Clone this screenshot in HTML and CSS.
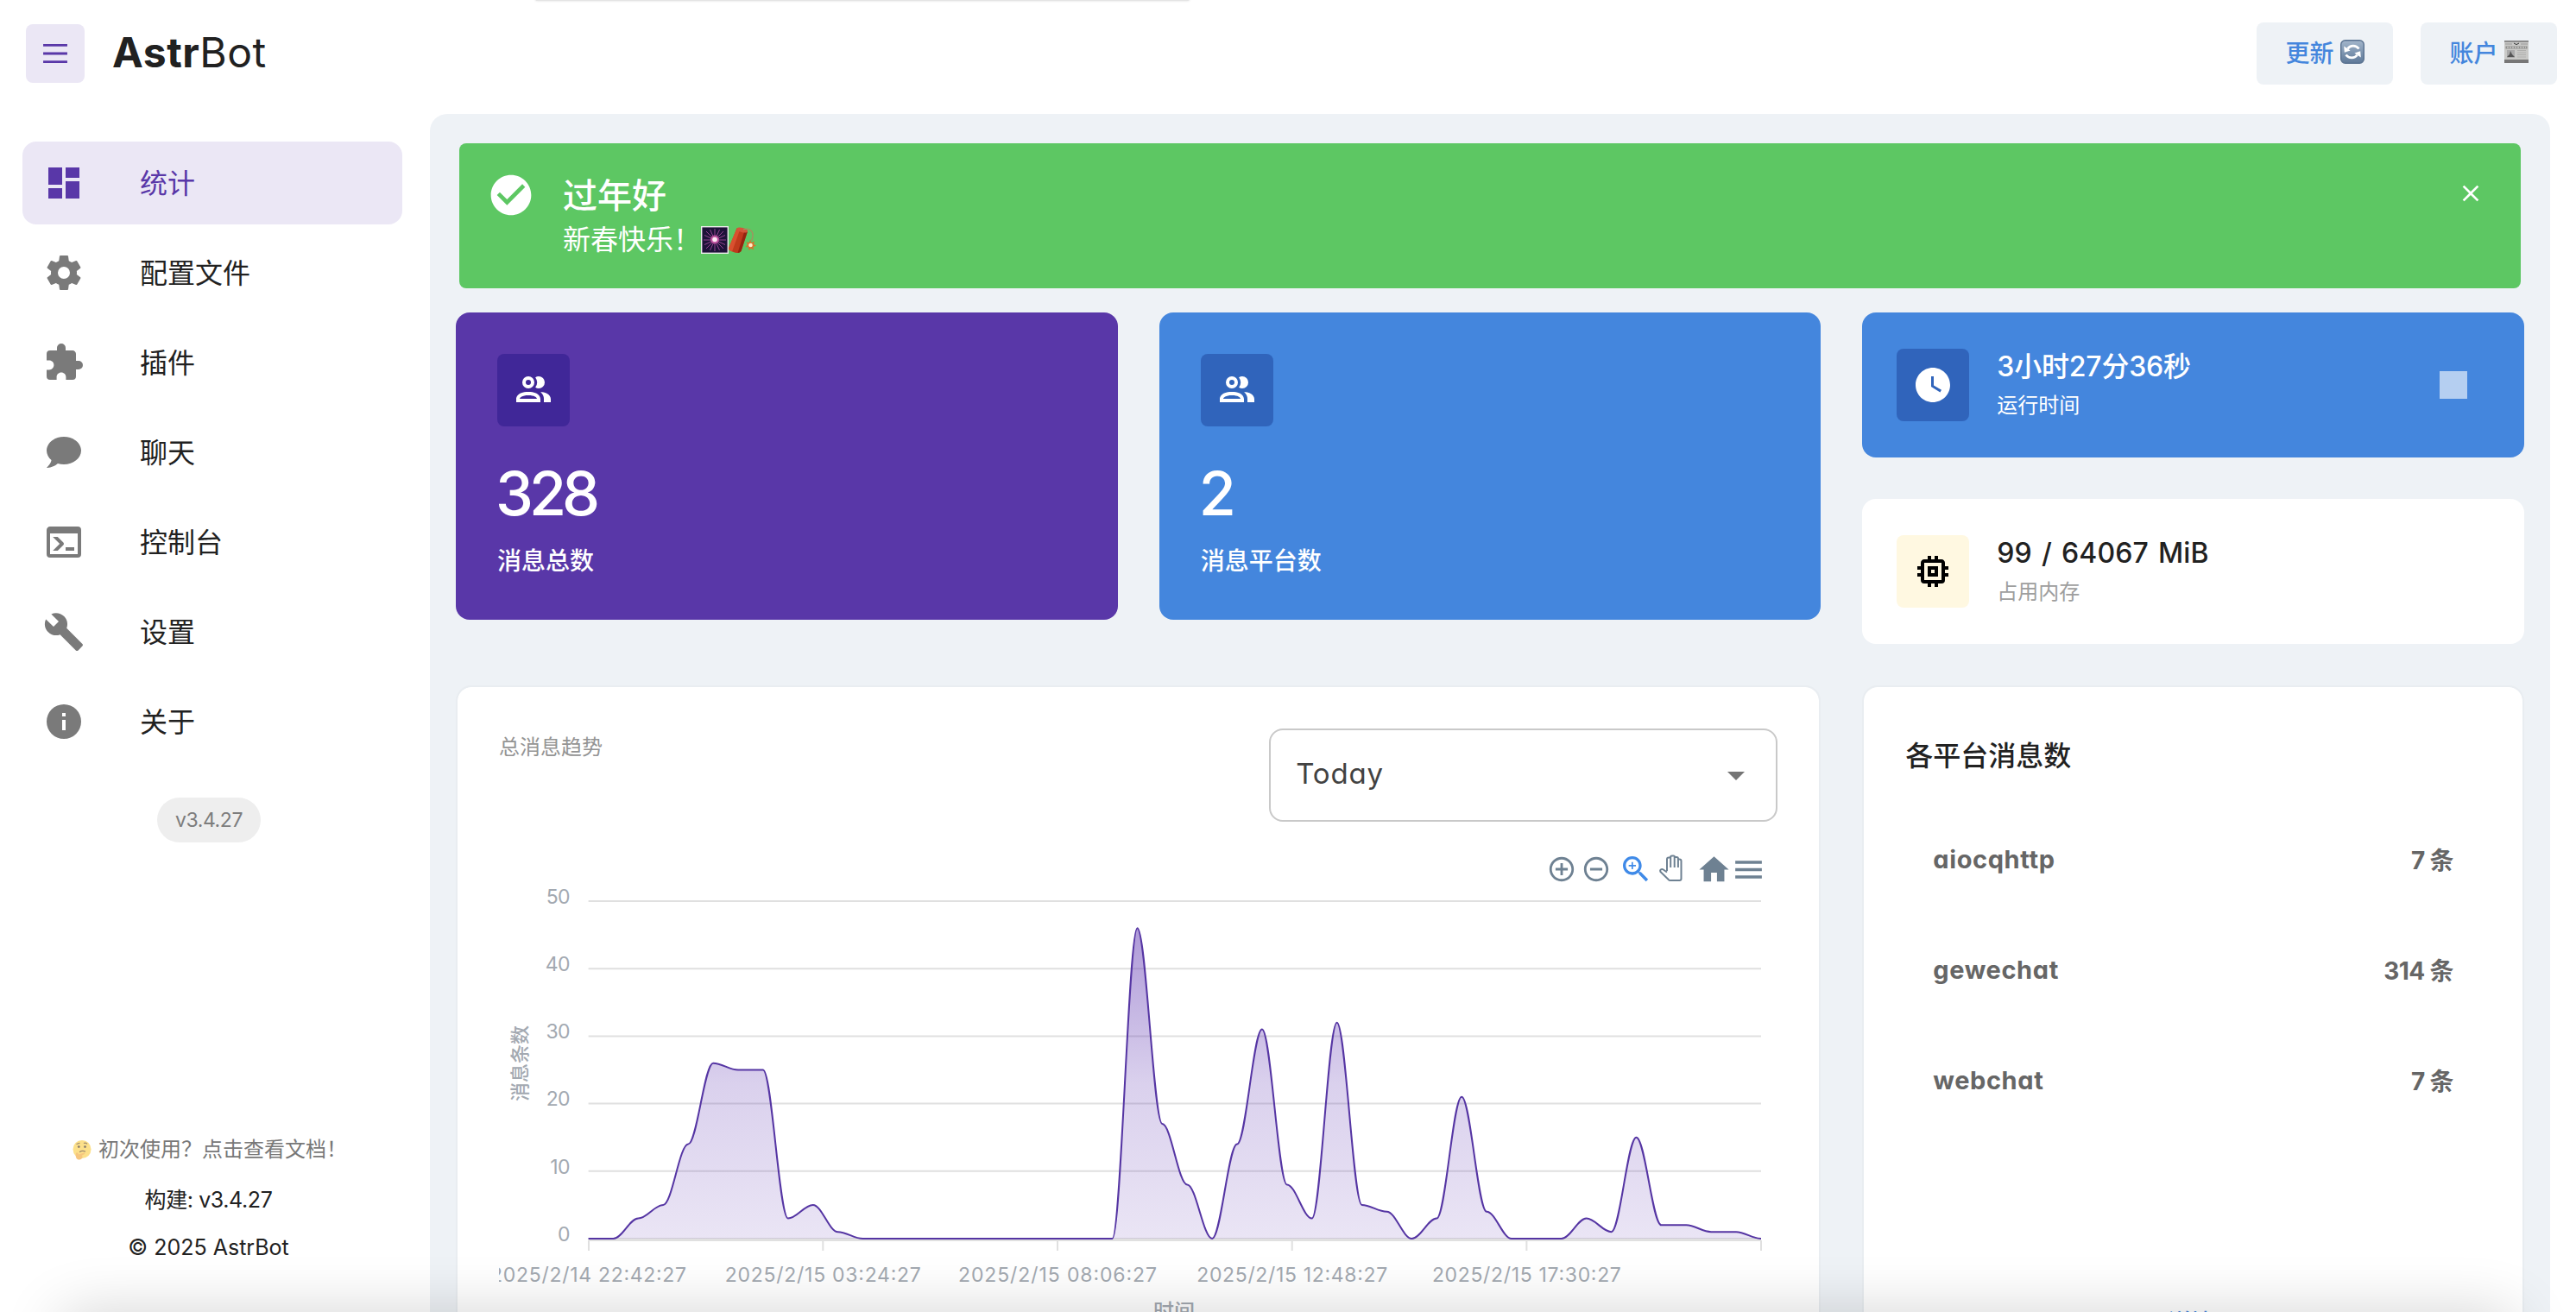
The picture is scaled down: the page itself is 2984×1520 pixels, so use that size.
FILE: index.html
```html
<!DOCTYPE html>
<html lang="zh-CN">
<head>
<meta charset="utf-8">
<title>AstrBot</title>
<link rel="stylesheet" href="styles.css">
</head>
<body>
<header class="topbar">
  <button class="menu-btn" aria-label="menu">
    <svg width="36" height="36" viewBox="0 0 24 24" fill="none" stroke="currentColor" stroke-width="1.9"><path d="M2.7 5.6h18.6M2.7 12h18.6M2.7 18.4h18.6"/></svg>
  </button>
  <div class="brand"><b>Astr</b><span>Bot</span></div>
  <div class="actions">
    <button class="action">更新
      <svg width="28" height="28" viewBox="0 0 28 28"><defs><linearGradient id="sync" x1="0" y1="0" x2="0" y2="1"><stop offset="0" stop-color="#a3b6cb"/><stop offset="1" stop-color="#5d7898"/></linearGradient></defs><rect x=".7" y=".7" width="26.6" height="26.6" rx="5" fill="url(#sync)" stroke="#5b7391" stroke-width="1.4"/><g fill="none" stroke="#fff" stroke-width="2.8"><path d="M8.500 10.500C11.500 6 18 6 21.500 10.500"/><path d="M19.500 17.800C16.500 22 10 22 6.500 17.500"/></g><path d="M4.200 7.500l.6 7.300 6.800-2.200zM23.800 20.500l-.6-7.300-6.800 2.200z" fill="#fff"/></svg>
    </button>
    <button class="action">账户
      <svg width="28" height="28" viewBox="0 0 28 28"><rect y="1" width="28" height="26" fill="#c9c9c7"/><path d="M0 1h28v2H0zM0 23h28v4H0z" fill="#777"/><path d="M0 2.500h28M1 5h8M19 5h8" stroke="#999" stroke-width="1.200"/><path d="M11 4l3 1.600 3-1.600" stroke="#333" fill="none"/><path d="M1.500 7.500h25v3h-25z" fill="#8f8f8d"/><path d="M3 9h22" stroke="#ddd" stroke-dasharray="2 1"/><path d="M3 12h9v9H3z" fill="#aaa"/><path d="M3 20l3-3 1-4 2 4 3 3z" fill="#555"/><path d="M15 12.500h10M15 15h10M15 17.500h10M15 20h10" stroke="#b0b0ae"/></svg>
    </button>
  </div>
</header>

<div class="shell">
  <nav class="sidebar">
    <ul class="nav">
      <li class="nav-item active"><svg class="icon" viewBox="0 0 24 24"><path d="M13,3V9H21V3M13,21H21V11H13M3,21H11V15H3M3,13H11V3H3V13Z"/></svg><span>统计</span></li>
      <li class="nav-item"><svg class="icon" viewBox="0 0 24 24"><path d="M12,15.500A3.500,3.500 0 0,1 8.500,12A3.500,3.500 0 0,1 12,8.500A3.500,3.500 0 0,1 15.500,12A3.500,3.500 0 0,1 12,15.500M19.430,12.970C19.470,12.650 19.500,12.330 19.500,12C19.500,11.670 19.470,11.340 19.430,11L21.540,9.370C21.730,9.220 21.780,8.950 21.660,8.730L19.660,5.270C19.540,5.050 19.270,4.960 19.050,5.050L16.560,6.050C16.040,5.660 15.500,5.320 14.870,5.070L14.500,2.420C14.460,2.180 14.250,2 14,2H10C9.750,2 9.540,2.180 9.500,2.420L9.130,5.070C8.500,5.320 7.960,5.660 7.440,6.050L4.950,5.050C4.730,4.960 4.460,5.050 4.340,5.270L2.340,8.730C2.210,8.950 2.270,9.220 2.460,9.370L4.570,11C4.530,11.340 4.500,11.670 4.500,12C4.500,12.330 4.530,12.650 4.570,12.970L2.460,14.630C2.270,14.780 2.210,15.050 2.340,15.270L4.340,18.730C4.460,18.950 4.730,19.030 4.950,18.950L7.440,17.940C7.960,18.340 8.500,18.680 9.130,18.930L9.500,21.580C9.540,21.820 9.750,22 10,22H14C14.250,22 14.460,21.820 14.500,21.580L14.870,18.930C15.500,18.670 16.040,18.340 16.560,17.940L19.050,18.950C19.270,19.030 19.540,18.950 19.660,18.730L21.660,15.270C21.780,15.050 21.730,14.780 21.540,14.630L19.430,12.970Z"/></svg><span>配置文件</span></li>
      <li class="nav-item"><svg class="icon" viewBox="0 0 24 24"><path d="M20.500,11H19V7C19,5.890 18.100,5 17,5H13V3.500A2.500,2.500 0 0,0 10.500,1A2.500,2.500 0 0,0 8,3.500V5H4A2,2 0 0,0 2,7V10.800H3.500C5,10.800 6.200,12 6.200,13.500C6.200,15 5,16.200 3.500,16.200H2V20A2,2 0 0,0 4,22H7.800V20.500C7.800,19 9,17.800 10.500,17.800C12,17.800 13.200,19 13.200,20.500V22H17A2,2 0 0,0 19,20V16H20.500A2.500,2.500 0 0,0 23,13.500A2.500,2.500 0 0,0 20.500,11Z"/></svg><span>插件</span></li>
      <li class="nav-item"><svg class="icon" viewBox="0 0 24 24"><path d="M12,3C17.500,3 22,6.580 22,11C22,15.420 17.500,19 12,19C10.760,19 9.570,18.820 8.470,18.500C5.550,21 2,21 2,21C4.330,18.670 4.700,17.100 4.750,16.500C3.050,15.070 2,13.130 2,11C2,6.580 6.500,3 12,3Z"/></svg><span>聊天</span></li>
      <li class="nav-item"><svg class="icon" viewBox="0 0 24 24"><path d="M20,19V7H4V19H20M20,3A2,2 0 0,1 22,5V19A2,2 0 0,1 20,21H4A2,2 0 0,1 2,19V5C2,3.890 2.900,3 4,3H20M13,17V15H18V17H13M9.580,13L5.570,9H8.400L11.700,12.300C12.090,12.690 12.090,13.330 11.700,13.720L8.420,17H5.590L9.580,13Z"/></svg><span>控制台</span></li>
      <li class="nav-item"><svg class="icon" viewBox="0 0 24 24"><path d="M22.700,19L13.600,9.900C14.500,7.600 14,4.900 12.100,3C10.100,1 7.100,0.600 4.700,1.700L9,6L6,9L1.600,4.700C0.400,7.100 0.900,10.100 2.900,12.100C4.800,14 7.500,14.500 9.800,13.600L18.900,22.700C19.300,23.100 19.900,23.100 20.300,22.700L22.600,20.400C23.100,20 23.100,19.300 22.700,19Z"/></svg><span>设置</span></li>
      <li class="nav-item"><svg class="icon" viewBox="0 0 24 24"><path d="M13,9H11V7H13M13,17H11V11H13M12,2A10,10 0 0,0 2,12A10,10 0 0,0 12,22A10,10 0 0,0 22,12A10,10 0 0,0 12,2Z"/></svg><span>关于</span></li>
    </ul>
    <span class="chip">v3.4.27</span>
    <footer class="side-foot">
      <a class="docs"><svg width="24" height="24" viewBox="0 0 24 24"><circle cx="12" cy="11.500" r="10.500" fill="#fbd04d"/><circle cx="8.300" cy="8.600" r="1.400" fill="#4d3820"/><circle cx="15.500" cy="8.600" r="1.400" fill="#4d3820"/><path d="M5.500 5.500l4-1.200M14 4.500c1.500-.8 3-.5 4 .8M9 14.800c2-1.400 5-1.600 7-.6" fill="none" stroke="#6b4a1f" stroke-width="1.200"/><path d="M5 16c1.500-2 3 .5 3 1.500l6-2c1.600-.3 1.800 1.200.6 1.700L12 18.500c1.500 3-1 5-3.500 5S4 21 5 16z" fill="#f2a93b"/></svg>初次使用？点击查看文档！</a>
      <span class="build">构建: <span class="ver">v3.4.27</span></span>
      <span class="copy">© 2025 AstrBot</span>
    </footer>
  </nav>

  <main class="content">
    <section class="alert">
      <svg class="alert-icon" viewBox="0 0 24 24"><path d="M12 2C6.500 2 2 6.500 2 12S6.500 22 12 22 22 17.500 22 12 17.500 2 12 2M10 17L5 12L6.410 10.590L10 14.170L17.590 6.580L19 8L10 17Z"/></svg>
      <div class="alert-text">
        <h2>过年好</h2>
        <p>新春快乐！<svg width="64" height="32" viewBox="0 0 64 32"><rect x=".7" y=".7" width="30.600" height="30.600" fill="#1d1238" stroke="#eee" stroke-width="1.400"/><g stroke="#a04a98" stroke-width=".9"><path d="M16 3v26M3 16h26M6 6l20 20M26 6L6 26M10.500 4l11 24M21.500 4l-11 24M4 10.500l24 11M4 21.500l24-11"/></g><circle cx="16" cy="15.500" r="5" fill="#d95cae" opacity=".75"/><circle cx="16" cy="15.500" r="2.800" fill="#ffe9f6"/><path d="M41.500 2.500q5-2 12.500 3.500L46.500 29q-3 3.500-9 1-6-2-5-5z" fill="#c03a1c"/><path d="M41.500 2.500l3.500 2L36 29.500q-5-2-4-4.500z" fill="#d9502f"/><path d="M50 7l4-1L46.500 29q-1.500 2-4 2z" fill="#942410"/><ellipse cx="47.800" cy="4.500" rx="6.500" ry="2.700" transform="rotate(15 47.800 4.500)" fill="#d3563a"/><path d="M49 4c8-3 14 3 9.500 13" fill="none" stroke="#a98d5f" stroke-width="1.300"/><path d="M57 15.500l1.400 3.500 3.600-1.500-1 3.500 3 1.500-3.500 1.500.5 3.500-3-1.800-2.500 2.300-.5-3.500-3.500-.5 2.500-2.500-1.500-3 3.500.5z" fill="#d8702c"/><circle cx="57.500" cy="22" r="2.300" fill="#fff0c8"/></svg></p>
      </div>
      <svg class="alert-close" viewBox="0 0 24 24"><path d="M19,6.410L17.590,5L12,10.590L6.410,5L5,6.410L10.590,12L5,17.590L6.410,19L12,13.410L17.590,19L19,17.590L13.410,12L19,6.410Z"/></svg>
    </section>

    <section class="grid">
      <article class="stat purple">
        <div class="badge"><svg class="icon" viewBox="0 0 24 24"><path d="M13.070 10.410A5 5 0 0 0 13.070 4.590A3.390 3.390 0 0 1 15 4A3.500 3.500 0 0 1 15 11A3.390 3.390 0 0 1 13.070 10.410M5.500 7.500A3.500 3.500 0 1 1 9 11A3.500 3.500 0 0 1 5.500 7.500M7.500 7.500A1.500 1.500 0 1 0 9 6A1.500 1.500 0 0 0 7.500 7.500M16 17V19H2V17S2 13 9 13 16 17 16 17M14 17C13.860 16.220 12.670 15 9 15S4.070 16.310 4 17M15.950 13A5.320 5.320 0 0 1 18 17V19H22V17S22 13.370 15.940 13Z"/></svg></div>
        <strong class="value">328</strong>
        <span class="label">消息总数</span>
      </article>
      <article class="stat blue">
        <div class="badge"><svg class="icon" viewBox="0 0 24 24"><path d="M13.070 10.410A5 5 0 0 0 13.070 4.590A3.390 3.390 0 0 1 15 4A3.500 3.500 0 0 1 15 11A3.390 3.390 0 0 1 13.070 10.410M5.500 7.500A3.500 3.500 0 1 1 9 11A3.500 3.500 0 0 1 5.500 7.500M7.500 7.500A1.500 1.500 0 1 0 9 6A1.500 1.500 0 0 0 7.500 7.500M16 17V19H2V17S2 13 9 13 16 17 16 17M14 17C13.860 16.220 12.670 15 9 15S4.070 16.310 4 17M15.950 13A5.320 5.320 0 0 1 18 17V19H22V17S22 13.370 15.940 13Z"/></svg></div>
        <strong class="value">2</strong>
        <span class="label">消息平台数</span>
      </article>
      <div class="stack">
        <article class="mini blue">
          <div class="badge"><svg class="icon" viewBox="0 0 24 24"><path d="M12 2C6.500 2 2 6.500 2 12C2 17.500 6.500 22 12 22C17.500 22 22 17.500 22 12S17.500 2 12 2M16.200 16.200L11 13V7H12.500V12.200L17 14.900L16.200 16.200Z"/></svg></div>
          <div class="mini-text"><strong class="uptime">3小时27分36秒</strong><span>运行时间</span></div>
          <i class="stop"></i>
        </article>
        <article class="mini plain">
          <div class="badge cream"><svg class="icon" viewBox="0 0 24 24"><path d="M17,17H7V7H17M21,11V9H19V7C19,5.890 18.100,5 17,5H15V3H13V5H11V3H9V5H7C5.890,5 5,5.890 5,7V9H3V11H5V13H3V15H5V17A2,2 0 0,0 7,19H9V21H11V19H13V21H15V19H17A2,2 0 0,0 19,17V15H21V13H19V11M13,13H11V11H13M15,9H9V15H15V9Z"/></svg></div>
          <div class="mini-text"><strong class="memory">99 / 64067 MiB</strong><span>占用内存</span></div>
        </article>
      </div>

      <article class="panel trend">
        <div class="trend-head">
          <span class="trend-title">总消息趋势</span>
          <div class="select"><span>Today</span><svg class="icon" viewBox="0 0 24 24"><path d="M7,10L12,15L17,10H7Z"/></svg></div>
        </div>
        <div class="toolbar">
          <svg width="34" height="34" viewBox="0 0 24 24"><path d="M13 7h-2v4H7v2h4v4h2v-4h4v-2h-4V7zm-1-5C6.480 2 2 6.480 2 12s4.480 10 10 10 10-4.480 10-10S17.520 2 12 2zm0 18c-4.410 0-8-3.590-8-8s3.590-8 8-8 8 3.590 8 8-3.590 8-8 8z"/></svg>
          <svg class="t-minus" width="34" height="34" viewBox="0 0 24 24"><path d="M7 11v2h10v-2H7zm5-9C6.480 2 2 6.480 2 12s4.480 10 10 10 10-4.480 10-10S17.520 2 12 2zm0 18c-4.410 0-8-3.590-8-8s3.590-8 8-8 8 3.590 8 8-3.590 8-8 8z"/></svg>
          <svg class="t-zoom" width="40" height="40" viewBox="0 0 24 24"><path d="M15.500 14h-.79l-.28-.27C15.410 12.590 16 11.110 16 9.500 16 5.910 13.090 3 9.500 3S3 5.910 3 9.500 5.910 16 9.500 16c1.610 0 3.090-.59 4.230-1.570l.27.28v.79l5 4.990L20.490 19l-4.990-5zm-6 0C7.010 14 5 11.990 5 9.500S7.010 5 9.500 5 14 7.010 14 9.500 11.990 14 9.500 14z"/><path d="M12 10h-2v2H9v-2H7V9h2V7h1v2h2v1z"/></svg>
          <svg class="t-pan" width="32" height="32" viewBox="0 0 32 32" fill="none" stroke="#6e8192" stroke-width="2" stroke-linejoin="round"><path d="M10 19V5.500q0-2 2-2h2V3q0-1.500 2-1.500h1.500Q19 1.500 19 3h2q2 0 2 2v.500h1.500q2 0 2 2V28q0 2-2 2H14q-1.500 0-2.500-1.200L2.500 20q-.8-1.500.3-2.500 1.400-1 3 0L10 20.500"/><path d="M14.200 3v12M18.700 3v12M22.900 5v10"/></svg>
          <svg class="t-home" width="41" height="41" viewBox="0 0 24 24"><path d="M10 20v-6h4v6h5v-8h3L12 3 2 12h3v8z"/></svg>
          <svg width="41" height="41" viewBox="0 0 24 24"><path d="M3 18h18v-2H3v2zm0-5h18v-2H3v2zm0-7v2h18V6H3z"/></svg>
        </div>
        <svg class="chart" width="1482" height="520" viewBox="578 1010 1482 520">
          <defs><linearGradient id="area" x1="0" y1="0" x2="0" y2="1"><stop offset="0" stop-color="#5e35b1" stop-opacity=".5"/><stop offset=".5" stop-color="#5e35b1" stop-opacity=".23"/><stop offset="1" stop-color="#5e35b1" stop-opacity=".13"/></linearGradient></defs>
          <g class="gridlines"><path d="M681.600 1044H2040M681.600 1122.200H2040M681.600 1200.400H2040M681.600 1278.600H2040M681.600 1356.800H2040M681.600 1435H2040M681.600 1437H2040"/><path d="M682 1437v12M953.300 1437v12M1225 1437v12M1496.700 1437v12M1768.400 1437v12M2040 1437v12"/></g>
          <path id="fill" fill="url(#area)"/>
          <path id="line" fill="none" stroke="#5535a3" stroke-width="2"/>
          <g class="ylabels">
            <text x="660" y="1047">50</text><text x="660" y="1125">40</text><text x="660" y="1203">30</text><text x="660" y="1281">20</text><text x="660" y="1359.500">10</text><text x="660" y="1438">0</text>
          </g>
          <g class="xlabels">
            <text x="681.600" y="1485" textLength="227">2025/2/14 22:42:27</text><text x="953.300" y="1485" textLength="227">2025/2/15 03:24:27</text><text x="1225" y="1485" textLength="230">2025/2/15 08:06:27</text><text x="1496.700" y="1485" textLength="221">2025/2/15 12:48:27</text><text x="1768.400" y="1485" textLength="219">2025/2/15 17:30:27</text>
          </g>
          <text class="axis-title" transform="translate(610 1232) rotate(-90)" font-size="22">消息条数</text>
          <text class="axis-title" x="1360" y="1528" font-size="24">时间</text>
        </svg>
      </article>

      <article class="panel platforms">
        <h3>各平台消息数</h3>
        <ul>
          <li><span>aiocqhttp</span><span class="count">7 条</span></li>
          <li><span>gewechat</span><span class="count">314 条</span></li>
          <li><span>webchat</span><span class="count">7 条</span></li>
        </ul>
        <a class="more">详情</a>
      </article>
    </section>
  </main>
</div>
<div class="edge-top"></div>
<div class="edge-bottom"></div>
<script src="chart.js"></script>
</body>
</html>
```
FILE: styles.css
```css
* { box-sizing: border-box; }
html, body { height: 100%; }
body {
  margin: 0;
  display: flex;
  flex-direction: column;
  overflow: hidden;
  background: #fff;
  color: #212121;
  font-family: Inter, "Noto Sans CJK SC", sans-serif;
  font-feature-settings: "cv11";
  font-size: 28px;
}
ul { list-style: none; margin: 0; padding: 0; }
h2, h3, p { margin: 0; }
button { border: 0; font: inherit; font-feature-settings: inherit; }
svg { display: block; flex: none; }
.icon { width: 48px; height: 48px; fill: currentColor; }

.topbar { height: 132px; flex: none; display: flex; align-items: flex-start; padding: 26px 22px 0 30px; }
.menu-btn { width: 68px; height: 68px; margin-top: 2px; padding: 0; border-radius: 8px; background: #ebe7f5; color: #5937a8; display: flex; align-items: center; justify-content: center; }
.brand { margin: 7px 0 0 32px; font-size: 48px; line-height: 56px; letter-spacing: .5px; }
.brand b { font-weight: 700; }
.actions { margin-left: auto; display: flex; gap: 32px; }
.action { width: 158px; height: 72px; border-radius: 8px; background: #eef2f6; color: #4486dd; font-size: 28px; font-weight: 500; padding: 0 0 4px; display: flex; align-items: center; justify-content: center; gap: 7px; }

.shell { flex: 1; min-height: 0; display: flex; padding-right: 30px; }
.sidebar { width: 498px; padding: 32px 32px 0 26px; display: flex; flex-direction: column; }
.nav { display: flex; flex-direction: column; gap: 8px; }
.nav-item { height: 96px; padding-left: 24px; border-radius: 16px; display: flex; align-items: center; gap: 64px; font-size: 32px; }
.nav-item span { margin-top: -4px; }
.nav-item .icon { color: #7a7a7a; }
.nav-item.active { background: #ebe7f5; color: #5937a8; }
.nav-item.active .icon { color: #5937a8; }
.chip { align-self: center; margin: 40px 0 0 -8px; width: 120px; height: 52px; border-radius: 26px; background: #eee; color: #7d7d7d; font-size: 23px; line-height: 52px; text-align: center; letter-spacing: -.4px; }
.side-foot { margin: auto 0 55px -9px; display: flex; flex-direction: column; align-items: center; line-height: 40px; }
.docs { display: flex; align-items: center; gap: 7px; height: 40px; margin-left: 2px; font-size: 24px; color: #787878; white-space: nowrap; }
.docs svg { opacity: .65; }
.build { margin-top: 18px; font-size: 25px; letter-spacing: -.4px; }
.copy { margin-top: 15px; font-size: 25px; letter-spacing: 0; }

.content { flex: 1; min-width: 0; overflow: hidden; border-radius: 20px 20px 0 0; background: #eef2f6; padding: 34px 30px 0; }
.alert { height: 168px; margin: 0 4px 28px; border-radius: 8px; background: #5dc763; color: #fff; display: flex; align-items: flex-start; padding: 32px 42px 0 32px; }
.alert-icon { width: 56px; height: 56px; fill: #fff; }
.alert-text { flex: 1; margin-left: 32px; }
.alert-text h2 { font-size: 40px; font-weight: 500; line-height: 57px; }
.alert-text p { display: flex; align-items: center; font-size: 32px; line-height: 46px; font-weight: 400; }
.alert-close { width: 32px; height: 32px; margin-top: 10px; fill: #fff; }

.grid { display: grid; grid-template-columns: repeat(3, minmax(0, 1fr)); gap: 48px; grid-template-rows: 384px 800px; }
.stat { height: 356px; border-radius: 16px; padding: 48px; color: #fff; display: flex; flex-direction: column; align-items: flex-start; }
.purple { background: #5937a8; }
.blue { background: #4486dd; color: #fff; }
.badge { flex: none; width: 84px; height: 84px; border-radius: 8px; display: flex; align-items: center; justify-content: center; color: #fff; }
.purple .badge { background: #402798; }
.blue .badge { background: #3064bb; }
.badge.cream { background: #fff8e1; color: #000; }
.value { margin: 40px 0 0 -2px; font-size: 70px; line-height: 76px; font-weight: 500; letter-spacing: -5px; }
.label { margin-top: 20px; font-size: 28px; line-height: 40px; font-weight: 500; }
.stack { display: flex; flex-direction: column; gap: 48px; }
.mini { flex: none; height: 168px; border-radius: 16px; padding: 0 66px 0 40px; display: flex; align-items: center; gap: 32px; }
.plain { background: #fff; }
.mini-text { flex: 1; display: flex; flex-direction: column; }
.mini-text strong { font-size: 32px; line-height: 48px; font-weight: 500; white-space: nowrap; }
.mini-text .uptime { letter-spacing: -.2px; }
.mini-text .memory { letter-spacing: .1px; word-spacing: 2.500px; }
.mini-text span { font-size: 24px; line-height: 42px; }
.plain .mini-text span { color: #9e9e9e; }
.stop { width: 32px; height: 32px; background: #b5cff1; }

.panel { background: #fff; background-clip: padding-box; border: 2px solid #e9edf1; border-radius: 18px; }
.trend { grid-column: span 2; padding: 48px 48px 0; overflow: hidden; }
.trend-head { display: flex; justify-content: space-between; align-items: flex-start; }
.trend-title { font-size: 24px; line-height: 43px; color: #949494; font-weight: 400; }
.select { width: 589px; height: 108px; border: 2px solid #c9c9c9; border-radius: 16px; display: flex; align-items: center; justify-content: space-between; padding: 0 22px 0 29px; font-size: 33px; color: #424242; }
.select span { margin-top: -5px; letter-spacing: .8px; }
.select .icon { color: #757575; }
.toolbar { display: flex; align-items: center; justify-content: flex-end; height: 40px; margin-top: 35px; padding-right: 13px; fill: #6e8192; }
.t-minus { margin-left: 6px; }
.t-zoom { margin-left: 9px; fill: #3f8ae8; }
.t-pan { margin-left: 6px; margin-top: -2px; }
.t-home { margin-left: 12px; margin-right: -1px; }
.chart { display: block; overflow: hidden; margin-top: -17px; }
.gridlines { stroke: #e0e0e0; stroke-width: 2; fill: none; }
.ylabels text, .xlabels text { font-size: 23px; fill: #a3a9b1; }
.ylabels text { text-anchor: end; letter-spacing: -.6px; }
.xlabels text, .axis-title { text-anchor: middle; }
.axis-title { fill: #a3a9b1; font-weight: 500; }

.platforms { padding: 52px 50px 0 48px; }
.platforms h3 { font-size: 32px; line-height: 56px; font-weight: 500; color: #212121; }
.platforms ul { margin-top: 27px; }
.platforms li { height: 128px; padding: 0 30px 0 32px; display: flex; align-items: center; justify-content: space-between; font-size: 29px; font-weight: 700; color: #666; letter-spacing: .6px; }
.count { letter-spacing: -.6px; font-size: 28px; }
.more { display: block; margin: 198px 4px 0 0; text-align: center; color: #4486dd; font-size: 27px; line-height: 40px; font-weight: 500; }

.edge-top { position: absolute; left: 620px; top: -4px; width: 758px; height: 5px; border-radius: 4px; background: #e4e4e4; box-shadow: 0 0 3px rgba(0, 0, 0, .15); }
.edge-bottom { position: absolute; left: 70px; right: 70px; top: 1524px; height: 60px; border-radius: 20px; box-shadow: 0 0 70px rgba(0, 0, 0, .2); }
```
FILE: chart.js
```js
const values = [0,0,3,5,14,26,25,25,3,5,1,0,0,0,0,0,0,0,0,0,0,0,46,17,8,0,14,31,8,3,32,5,4,0,3,21,4,0,0,0,3,1,15,2,2,1,1,0];
const left = 681.6, step = (2040 - left) / (values.length - 1), base = 1435, unit = 7.82;
const px = i => left + i * step;
const py = v => base - v * unit;
let d = `M${px(0)} ${py(values[0])}`;
for (let i = 1; i < values.length; i++) {
  const k = step * 0.35;
  d += `C${px(i - 1) + k} ${py(values[i - 1])} ${px(i) - k} ${py(values[i])} ${px(i)} ${py(values[i])}`;
}
document.getElementById('line').setAttribute('d', d);
document.getElementById('fill').setAttribute('d', d + `V${base}H${left}Z`);
```
